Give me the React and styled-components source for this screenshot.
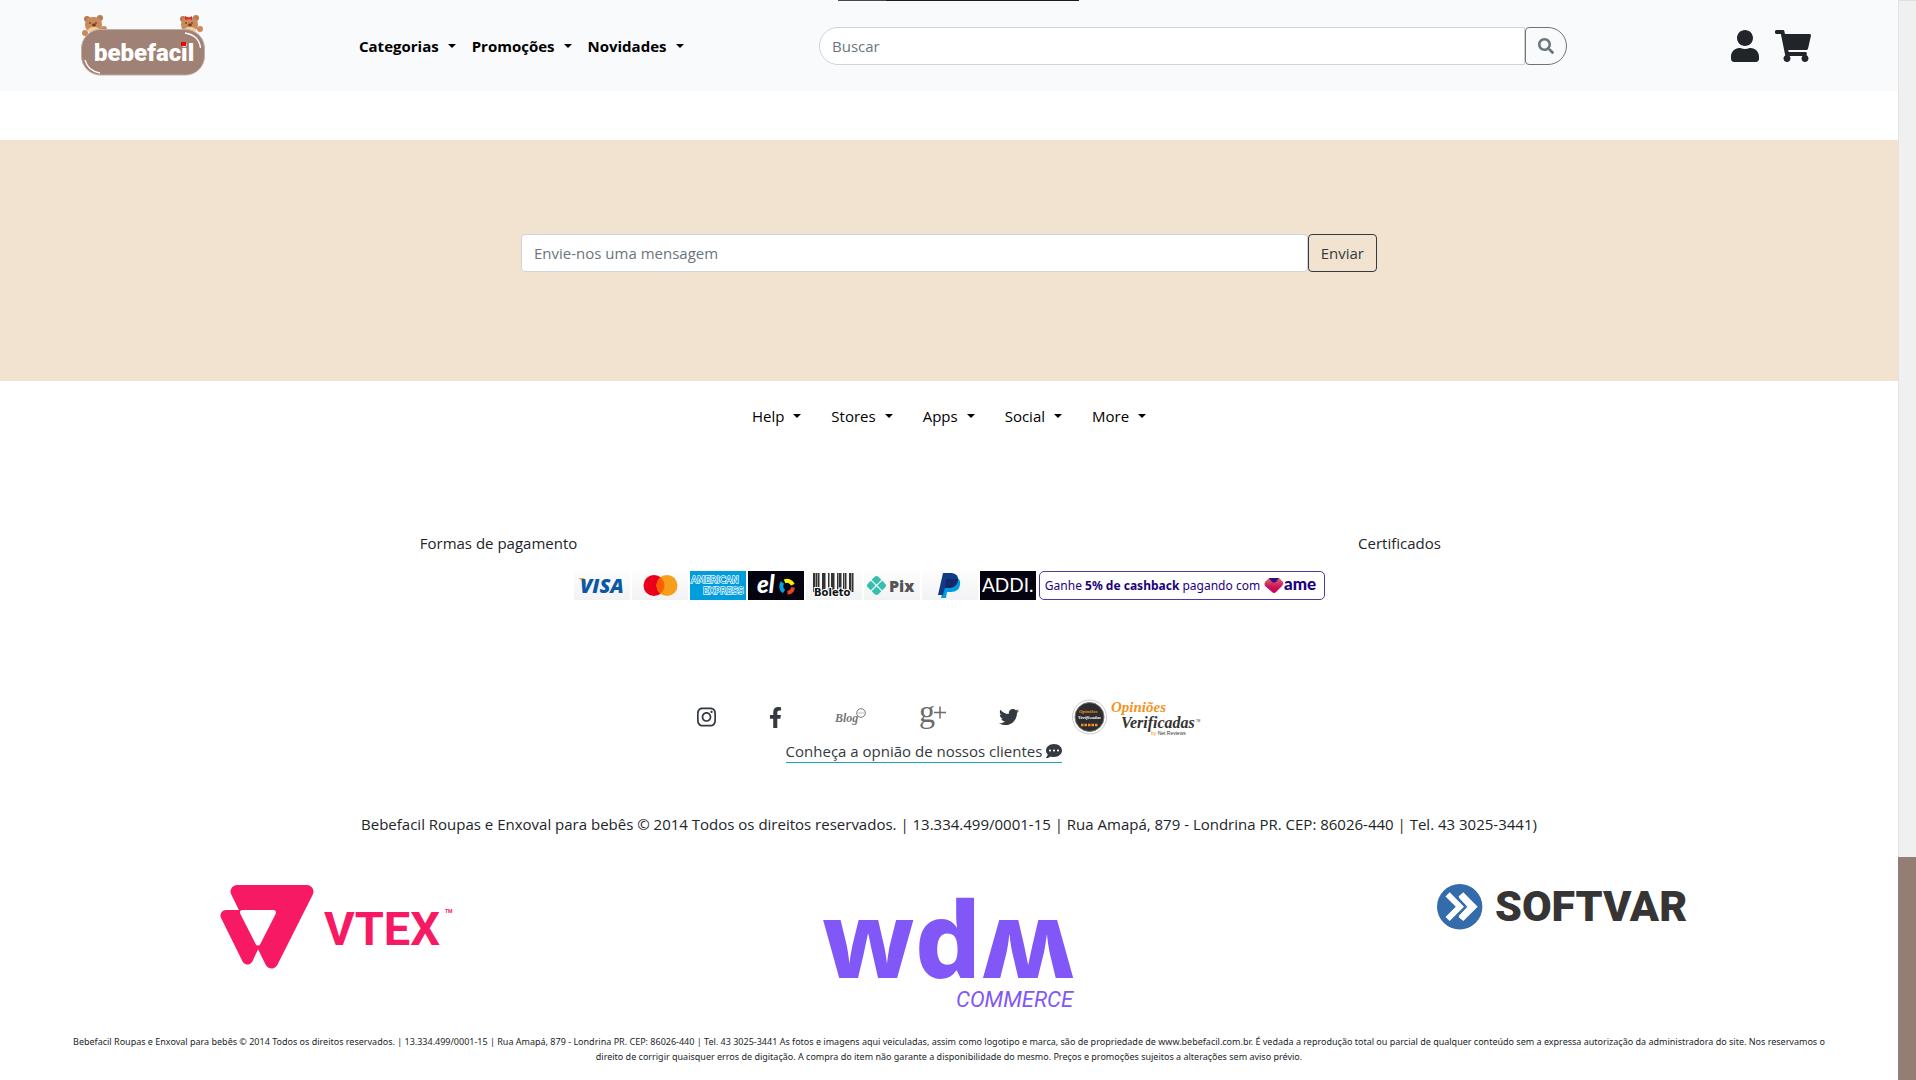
import React from "react";
import styled, { createGlobalStyle } from "styled-components";
import {
  FaUser,
  FaShoppingCart,
  FaSearch,
  FaInstagram,
  FaFacebookF,
  FaTwitter,
  FaCommentDots,
} from "react-icons/fa";

const GlobalStyle = createGlobalStyle`
  *, *::before, *::after { box-sizing: border-box; }
  body {
    margin: 0;
    background: #fff;
    color: #212529;
    font-family: "Open Sans", "Noto Sans", sans-serif;
    font-size: 15px;
    line-height: 24px;
  }
  button, input { font: inherit; margin: 0; }
  a { color: inherit; text-decoration: none; }
  svg { display: block; flex: none; overflow: visible; }
  p { margin: 0; }
`;

const Shell = styled.div`
  display: grid;
  grid-template-columns: minmax(0, 1fr) 18px;
  min-height: 100vh;
`;

const Page = styled.div`
  display: flex;
  flex-direction: column;
`;

const ScrollTrack = styled.div`
  position: sticky;
  top: 0;
  height: 100vh;
  display: flex;
  flex-direction: column;
  justify-content: flex-end;
  background: #f0f0f0;
  border-left: 1px solid #e4e4e4;
  border-top: 1px solid #e0e0e0;
`;

const ScrollThumb = styled.div`
  height: 223px;
  margin-left: -1px;
  background: #947e74;
`;

const LoadStrip = styled.div`
  position: absolute;
  top: 0;
  left: 838px;
  width: 241px;
  height: 1px;
  background: linear-gradient(to right, #504848 48px, #1d1b20 48px);
`;

const Header = styled.header`
  display: grid;
  grid-template-columns: 278px 460px minmax(0, 748px) minmax(80px, 1fr);
  align-items: center;
  height: 91px;
  padding: 0 87px 0 81px;
  background: #f8fafc;
`;

const MainNav = styled.nav`
  display: flex;
  gap: 16px;
`;

const MenuButton = styled.button`
  display: inline-flex;
  align-items: center;
  gap: 9px;
  padding: ${(p) => (p.$strong ? "0" : "6px 15px")};
  border: 0;
  background: none;
  color: #000;
  font-weight: ${(p) => (p.$strong ? 700 : 400)};
  cursor: pointer;

  &::after {
    content: "";
    border-top: 4px solid;
    border-left: 4px solid transparent;
    border-right: 4px solid transparent;
  }
`;

const Form = styled.form`
  display: flex;
  width: 100%;
  max-width: 856px;
`;

const Field = styled.input`
  flex: 1;
  min-width: 0;
  height: 38px;
  padding: 6px 12px;
  border: 1px solid #ced4da;
  border-radius: ${(p) => (p.$pill ? "19px 0 0 19px" : "4px")};
  background: #fff;
  color: #495057;

  &::placeholder {
    color: #6c757d;
    opacity: 1;
  }
`;

const FormButton = styled.button`
  display: flex;
  align-items: center;
  height: 38px;
  padding: 6px 12px;
  border: 1px solid ${(p) => (p.$pill ? "#6c757d" : "#343a40")};
  border-radius: ${(p) => (p.$pill ? "4px 19px 19px 4px" : "4px")};
  background: transparent;
  color: ${(p) => (p.$pill ? "#6c757d" : "#343a40")};
  cursor: pointer;

  svg {
    width: 16px;
    height: 16px;
  }
`;

const Account = styled.div`
  display: flex;
  justify-content: flex-end;
  gap: 16px;
`;

const IconLink = styled.a`
  display: flex;
  color: ${(p) => p.$color || "#343a40"};

  svg {
    width: ${(p) => p.$width}px;
    height: ${(p) => p.$height}px;
  }
`;

const Contact = styled.section`
  display: flex;
  justify-content: center;
  margin-top: 49px;
  padding: 94px 24px 109px;
  background: #f2e3d0;
`;

const Footer = styled.footer`
  display: flex;
  flex-direction: column;
`;

const FooterNav = styled.nav`
  display: flex;
  justify-content: center;
  padding-top: 17px;
`;

const Headings = styled.div`
  display: grid;
  grid-template-columns: 1fr 1fr;
  margin-top: 97px;
  padding: 0 48px;
  text-align: center;
`;

const Payments = styled.div`
  display: flex;
  justify-content: center;
  gap: 2px;
  margin-top: 16px;
`;

const CashbackLink = styled.a`
  display: flex;
  align-items: center;
  justify-content: center;
  gap: 4px;
  width: 286px;
  height: 29px;
  margin-left: 1px;
  border: 1px solid #4b3aa0;
  border-radius: 5px;
  color: #1d0080;
  font-family: "Noto Sans", sans-serif;
  font-size: 12px;
  white-space: nowrap;
`;

const Social = styled.div`
  display: flex;
  justify-content: center;
  align-items: center;
  gap: 53px;
  height: 36px;
  margin-top: 99px;
`;

const ReviewLink = styled.a`
  display: flex;
  align-items: center;
  align-self: center;
  gap: 4px;
  margin: 5px 50px 0 0;
  border-bottom: 1px solid #17a2b8;
  color: #343a40;
  line-height: 22px;

  svg {
    width: 16px;
    height: 16px;
  }
`;

const Copyright = styled.p`
  margin-top: 49px;
  text-align: center;
`;

const Partners = styled.div`
  display: grid;
  grid-template-columns: repeat(3, 1fr);
  justify-items: center;
  align-items: start;
  margin-top: 48px;
  padding: 0 30px;
`;

const FinePrint = styled.p`
  margin-top: 24px;
  padding: 0 64px;
  font-family: "Noto Sans", sans-serif;
  font-size: 9px;
  line-height: 15px;
  text-align: center;
`;

const Bear = ({ x, bow }) => (
  <g transform={`translate(${x} 0)`}>
    <circle cx="3" cy="4" r="3" fill="#b97a50" />
    <circle cx="16" cy="3" r="3" fill="#b97a50" />
    <rect x="1" y="2" width="17" height="15" rx="7" fill="#c98b5e" />
    <circle cx="1" cy="18" r="3" fill="#c98b5e" />
    <circle cx="20" cy="14" r="3" fill="#c98b5e" />
    <ellipse cx="10" cy="15" rx="6" ry="3" fill="#f7cf94" />
    <circle cx="6" cy="8" r="1" fill="#7b4a2c" />
    <circle cx="12" cy="8" r="1" fill="#7b4a2c" />
    <ellipse cx="10" cy="10" rx="2" ry="1.4" fill="#7b3c28" />
    {bow && <path d="M5 1l4 2 3-2v4L9 4 5 5z" fill="#e6252b" />}
  </g>
);

const StoreLogo = () => (
  <svg width="124" height="61" viewBox="0 0 124 61" role="img" aria-label="bebefacil">
    <Bear x={3} />
    <Bear x={99} bow />
    <rect x="0.5" y="14.5" width="123" height="45.5" rx="19" fill="#a08175" stroke="#c2aca4" />
    <path d="M104 18q14 2 15.500 15M4 45q3 11 15 13" fill="none" stroke="#fff" strokeWidth="1.300" />
    <text x="13" y="46" fontFamily="Roboto, sans-serif" fontWeight="900" fontSize="24" fill="#fff">
      bebefacil
    </text>
    <rect x="100" y="27" width="5" height="4" fill="#f00000" />
  </svg>
);

const CardFrame = ({ label, bg = "url(#cardShade)", children }) => (
  <svg width="56" height="29" viewBox="0 0 56 29" role="img" aria-label={label}>
    <defs>
      <linearGradient id="cardShade" x2="0" y2="1">
        <stop offset="0" stopColor="#fdfdfd" />
        <stop offset="1" stopColor="#f1f2f4" />
      </linearGradient>
    </defs>
    <rect width="56" height="29" fill={bg} />
    {children}
  </svg>
);

const Cards = () => (
  <>
    <CardFrame label="Visa">
      <path d="M4 7h6l3 8-4-5z" fill="#f7a823" />
      <text x="6" y="22" fontFamily="Open Sans, sans-serif" fontWeight="800" fontStyle="italic" fontSize="20" fill="#0b59a6">
        VISA
      </text>
    </CardFrame>
    <CardFrame label="Mastercard">
      <circle cx="22" cy="14.5" r="10.5" fill="#eb001b" />
      <circle cx="35" cy="14.5" r="10.5" fill="#f79e1b" />
      <path d="M28.500 6.300a10.500 10.500 0 0 1 0 16.400a10.500 10.500 0 0 1 0-16.400" fill="#ff5f00" />
    </CardFrame>
    <CardFrame label="American Express" bg="#009ddd">
      <g fontFamily="DejaVu Sans, sans-serif" fontSize="9" fill="#009ddd" stroke="#e8f7fd" strokeWidth="1.4" paintOrder="stroke">
        <text x="1" y="12">AMERICAN</text>
        <text x="13" y="23">EXPRESS</text>
      </g>
    </CardFrame>
    <CardFrame label="Elo" bg="#05030f">
      <text x="9" y="22" fontFamily="Lato, sans-serif" fontWeight="900" fontStyle="italic" fontSize="24" fill="#fff">
        el
      </text>
      <g fill="none" strokeWidth="4">
        <path d="M36.600 10.300a6.200 6.200 0 0 1 8.200 3.500" stroke="#fff100" />
        <path d="M45 16.500a6.200 6.200 0 0 1-5.500 5.200" stroke="#ef4123" />
        <path d="M34.500 11.500a6.200 6.200 0 0 0 1.500 9" stroke="#00a4e0" />
      </g>
    </CardFrame>
    <CardFrame label="Boleto">
      <g fill="#333">
        {[7, 10, 12, 16, 18, 22, 25, 27, 31, 33, 37, 39, 43, 46].map((x, i) => (
          <rect key={x} x={x} y="2" width={i % 3 ? 1.5 : 2.5} height="19" />
        ))}
      </g>
      <text x="8" y="25" fontFamily="DejaVu Sans, sans-serif" fontWeight="700" fontSize="10" fill="#111" stroke="#fff" strokeWidth="2" paintOrder="stroke">
        Boleto
      </text>
    </CardFrame>
    <CardFrame label="Pix">
      <rect x="5" y="7" width="15" height="15" rx="3" transform="rotate(45 12.500 14.500)" fill="#37bfae" />
      <path d="M6 8l13 13M19 8L6 21" stroke="#e8faf7" strokeWidth="1.2" />
      <text x="25" y="21" fontFamily="Open Sans, sans-serif" fontWeight="800" fontSize="16" fill="#555">
        Pix
      </text>
    </CardFrame>
    <CardFrame label="PayPal">
      <path d="M24 6h9q6 1 5 8t-9 7h-4l-1 6h-5z" fill="#009cde" />
      <path d="M21 2h9q7 1 6 8t-9 7h-4l-2 7h-5z" fill="#0f3b87" />
      <path d="M24 8h12q-1 8-9 9h-4z" fill="#15266a" />
    </CardFrame>
    <CardFrame label="Addi" bg="#05030f">
      <text x="2" y="21" fontFamily="Lato, sans-serif" fontSize="19" fill="#fff">
        ADDI.
      </text>
    </CardFrame>
  </>
);

const AmeLogo = () => (
  <svg width="54" height="17" viewBox="0 0 54 17" role="img" aria-label="ame">
    <defs>
      <linearGradient id="ameHeart" x2="0" y2="1">
        <stop offset="0" stopColor="#d36b72" />
        <stop offset="0.6" stopColor="#cf1259" />
        <stop offset="1" stopColor="#c8004f" />
      </linearGradient>
    </defs>
    <path d="M5 1h10l4 4q1 2-1 4l-6 6q-2 2-4 0L1 9q-1-2 0-4z" fill="url(#ameHeart)" />
    <path d="M5 1h10l-3 4q-2 1-4 0z" fill="#33107f" />
    <text x="20" y="13" fontFamily="Lato, sans-serif" fontWeight="900" fontSize="17" fill="#1d0080">
      ame
    </text>
  </svg>
);

const BlogIcon = () => (
  <svg width="31" height="18" viewBox="0 0 31 18" role="img" aria-label="Blog">
    <text x="0" y="14" fontFamily="Liberation Serif, serif" fontWeight="700" fontStyle="italic" fontSize="12" fill="#777">
      Blog
    </text>
    <circle cx="26" cy="5" r="4.3" fill="#fff" stroke="#777" />
    <path d="M23.500 5h5" stroke="#777" strokeDasharray="1 1" />
  </svg>
);

const GooglePlusIcon = () => (
  <svg width="27" height="26" viewBox="0 0 27 26" role="img" aria-label="Google Plus">
    <text x="0" y="18" fontFamily="Liberation Serif, serif" fontSize="32" fill="#6b6b6b">
      g
    </text>
    <path d="M15 8.500h12M21 2.500v12" stroke="#6b6b6b" strokeWidth="1.5" />
  </svg>
);

const VerifiedIcon = () => (
  <svg width="129" height="38" viewBox="0 0 129 38" role="img" aria-label="Opiniões Verificadas">
    <circle cx="17.5" cy="19" r="17" fill="#fff" stroke="#ccc" />
    <circle cx="17.5" cy="19" r="14.5" fill="#2d2d2f" stroke="#777" />
    <g fontFamily="Liberation Serif, serif" fontWeight="700" fontStyle="italic">
      <text x="7" y="15" fontSize="5" fill="#f39323">Opiniões</text>
      <text x="6" y="21" fontSize="5" fill="#fff">Verificadas</text>
      <text x="39" y="14" fontSize="15" fill="#f39323">Opiniões</text>
      <text x="49" y="30" fontSize="16" fill="#333">Verificadas</text>
    </g>
    <path d="M9 27h17" stroke="#f39323" strokeWidth="2.5" strokeDasharray="2.5 1" />
    <g fontFamily="Liberation Sans, sans-serif" fontSize="5">
      <text x="79" y="37" fill="#f39323">by <tspan fill="#333">Net Reviews</tspan></text>
      <text x="124" y="24" fontSize="3" fill="#333">TM</text>
    </g>
  </svg>
);

const VtexLogo = () => (
  <svg width="233" height="86" viewBox="0 0 233 86" role="img" aria-label="VTEX">
    <g fill="#f71963" stroke="#f71963" strokeLinejoin="round">
      <path d="M17 7.500H87L51.500 78z" strokeWidth="13" />
      <path d="M6 31.500H48L27.500 75z" strokeWidth="11" />
    </g>
    <path d="M22.500 28.500H53.500L38 59z" fill="#fff" stroke="#fff" strokeWidth="5" strokeLinejoin="round" />
    <text x="104" y="61" fontFamily="Roboto, sans-serif" fontWeight="700" fontSize="47" fill="#f71963">
      VTEX
    </text>
    <text x="225" y="29" fontFamily="Roboto, sans-serif" fontWeight="700" fontSize="5" fill="#f71963">
      TM
    </text>
  </svg>
);

const WdmLogo = () => (
  <svg width="250" height="126" viewBox="0 0 250 126" role="img" aria-label="wdm commerce">
    <g fill="#8257f8">
      <text x="-2" y="94" fontFamily="Noto Sans, sans-serif" fontWeight="800" fontSize="105">wdʍ</text>
      <text x="132" y="123" fontFamily="Roboto, sans-serif" fontStyle="italic" fontSize="22">
        COMMERCE
      </text>
    </g>
  </svg>
);

const SoftvarLogo = () => (
  <svg width="250" height="46" viewBox="0 0 250 46" role="img" aria-label="SOFTVAR">
    <circle cx="22.7" cy="22.8" r="22.7" fill="#336bab" />
    <path d="M12.700 8.300L8.500 12.500 18.800 22.700 8.500 33 12.700 37 27 22.700z" fill="#fff" />
    <path d="M26.300 8.300L21.500 12.500 31 22.700 21.500 33 26.300 37 40.700 22.700z" fill="#fff" />
    <path d="M23 13l7 7.500v4.500l-7 7.500" fill="none" stroke="#fff" strokeWidth="3" />
    <path d="M19.500 12.500l10 10.200-10 10.200" fill="none" stroke="#336bab" strokeWidth="1.2" />
    <text x="58" y="37" fontFamily="Roboto, sans-serif" fontWeight="900" fontSize="43" fill="#373435">
      SOFTVAR
    </text>
  </svg>
);

const mainMenus = ["Categorias", "Promoções", "Novidades"];
const footerMenus = ["Help", "Stores", "Apps", "Social", "More"];
const company =
  "Bebefacil Roupas e Enxoval para bebês © 2014 Todos os direitos reservados. | 13.334.499/0001-15 | Rua Amapá, 879 - Londrina PR. CEP: 86026-440 | Tel. 43 3025-3441";

export default function App() {
  const stop = (e) => e.preventDefault();
  return (
    <>
      <GlobalStyle />
      <Shell>
        <Page>
          <Header>
            <a href="#inicio"><StoreLogo /></a>
            <MainNav aria-label="Principal">
              {mainMenus.map((m) => (
                <MenuButton key={m} type="button" $strong>{m}</MenuButton>
              ))}
            </MainNav>
            <Form role="search" onSubmit={stop}>
              <Field $pill type="search" placeholder="Buscar" aria-label="Buscar" />
              <FormButton $pill type="submit" aria-label="Pesquisar"><FaSearch /></FormButton>
            </Form>
            <Account>
              <IconLink href="#conta" aria-label="Minha conta" $width={28} $height={32} $color="#212529"><FaUser /></IconLink>
              <IconLink href="#carrinho" aria-label="Carrinho" $width={36} $height={32} $color="#212529"><FaShoppingCart /></IconLink>
            </Account>
          </Header>
          <Contact>
            <Form onSubmit={stop}>
              <Field type="text" placeholder="Envie-nos uma mensagem" aria-label="Envie-nos uma mensagem" />
              <FormButton type="submit">Enviar</FormButton>
            </Form>
          </Contact>
          <Footer>
            <FooterNav aria-label="Rodapé">
              {footerMenus.map((m) => (
                <MenuButton key={m} type="button">{m}</MenuButton>
              ))}
            </FooterNav>
            <Headings>
              <p>Formas de pagamento</p>
              <p>Certificados</p>
            </Headings>
            <Payments>
              <Cards />
              <CashbackLink href="#ame">
                <span>Ganhe <b>5% de cashback</b> pagando com</span>
                <AmeLogo />
              </CashbackLink>
            </Payments>
            <Social>
              <IconLink href="#instagram" aria-label="Instagram" $width={19} $height={22}><FaInstagram /></IconLink>
              <IconLink href="#facebook" aria-label="Facebook" $width={13} $height={21}><FaFacebookF /></IconLink>
              <a href="#blog"><BlogIcon /></a>
              <a href="#google"><GooglePlusIcon /></a>
              <IconLink href="#twitter" aria-label="Twitter" $width={20} $height={20}><FaTwitter /></IconLink>
              <a href="#opinioes"><VerifiedIcon /></a>
            </Social>
            <ReviewLink href="#clientes">
              Conheça a opnião de nossos clientes <FaCommentDots />
            </ReviewLink>
            <Copyright>{company})</Copyright>
            <Partners>
              <a href="#vtex"><VtexLogo /></a>
              <a href="#wdm"><WdmLogo /></a>
              <a href="#softvar"><SoftvarLogo /></a>
            </Partners>
            <FinePrint>
              {company} As fotos e imagens aqui veiculadas, assim como logotipo e marca, são de propriedade de
              www.bebefacil.com.br. É vedada a reprodução total ou parcial de qualquer conteúdo sem a expressa
              autorização da administradora do site. Nos reservamos o direito de corrigir quaisquer erros de
              digitação. A compra do item não garante a disponibilidade do mesmo. Preços e promoções sujeitos a
              alterações sem aviso prévio.
            </FinePrint>
          </Footer>
        </Page>
        <ScrollTrack aria-hidden="true"><ScrollThumb /></ScrollTrack>
      </Shell>
      <LoadStrip />
    </>
  );
}
